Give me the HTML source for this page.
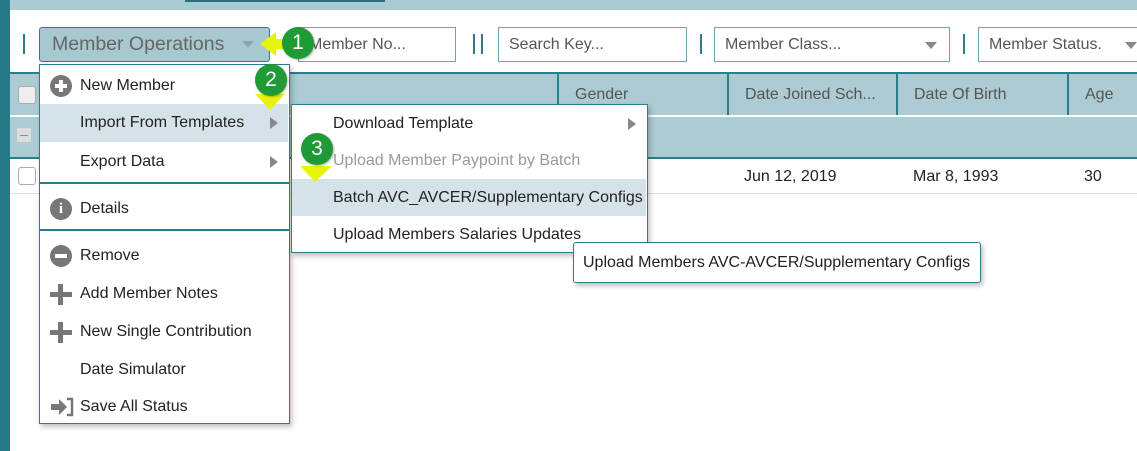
<!DOCTYPE html>
<html><head><style>
*{box-sizing:border-box;margin:0;padding:0}
body{width:1137px;height:451px;overflow:hidden;background:#fff;font-family:"Liberation Sans","DejaVu Sans",sans-serif;position:relative;font-size:16px;color:#222}
.a{position:absolute}
.inp{position:absolute;top:27px;height:35px;border:1px solid #6fa3ad;background:#fff;color:#555;font-size:16px;padding:8px 10px;white-space:nowrap;overflow:hidden}
.sep{position:absolute;top:34px;width:2px;height:20px;background:#2a7f8a}
.tri{position:absolute;width:0;height:0;border-left:6px solid transparent;border-right:6px solid transparent;border-top:7px solid #888}
.hd{position:absolute;top:74px;height:41px;color:#555;font-size:16px;padding:12px 0 0 16px;border-left:2px solid #2a7f8a;white-space:nowrap}
.mi{position:absolute;left:0;width:248px;height:38px;padding-left:40px;line-height:38px;font-size:16px;color:#222;white-space:nowrap}
.si{position:absolute;left:0;width:354px;height:37px;padding-left:41px;line-height:37px;font-size:16px;color:#222;white-space:nowrap}
.rt{position:absolute;right:10px;top:13px;width:0;height:0;border-top:6px solid transparent;border-bottom:6px solid transparent;border-left:8px solid #888}
.gc{position:absolute;width:32px;height:32px;border-radius:50%;background:#1f9a36;color:#fff;font-size:21px;text-align:center;line-height:32px;box-shadow:1px 1px 2px rgba(0,0,0,.3)}
.ic{position:absolute;left:10px;width:22px;height:22px;border-radius:50%;background:#777;top:8px}
</style></head><body>
<div class="a" style="left:0;top:0;width:1137px;height:10px;background:#a9cbd3"></div>
<div class="a" style="left:185px;top:0;width:200px;height:2px;background:#2a6f7a"></div>
<div class="a" style="left:0;top:0;width:10px;height:451px;background:#267a88"></div>
<div class="sep" style="left:23px"></div>
<div class="a" style="left:39px;top:27px;width:231px;height:35px;background:#a8c8cf;border:1px solid #2a7f8a;border-radius:3px;color:#666;font-size:19.5px;padding:5px 12px;white-space:nowrap">Member Operations</div>
<div class="tri" style="left:242px;top:41px;border-top-color:#8aa"></div>
<div class="inp" style="left:298px;width:158px">Member No...</div>
<div class="sep" style="left:473px"></div><div class="sep" style="left:481px"></div>
<div class="inp" style="left:498px;width:189px">Search Key...</div>
<div class="sep" style="left:700px"></div>
<div class="inp" style="left:714px;width:236px">Member Class...</div>
<div class="tri" style="left:925px;top:42px"></div>
<div class="sep" style="left:963px"></div>
<div class="inp" style="left:978px;width:170px">Member Status.</div>
<div class="tri" style="left:1125px;top:42px"></div>
<div class="a" style="left:10px;top:72px;width:1127px;height:2px;background:#2a7f8a"></div>
<div class="a" style="left:10px;top:74px;width:1127px;height:84px;background:#adcbd3"></div>
<div class="a" style="left:10px;top:115px;width:1127px;height:2px;background:#fff"></div>
<div class="a" style="left:10px;top:157px;width:1127px;height:2px;background:#2a7f8a"></div>
<div class="a" style="left:18px;top:86px;width:18px;height:18px;background:#eee;border:1px solid #aaa;border-radius:3px"></div>
<div class="a" style="left:17px;top:128px;width:14px;height:14px;background:#ddd;color:#888;font-size:14px;line-height:12px;text-align:center">–</div>
<div class="a" style="left:18px;top:167px;width:18px;height:18px;background:#fff;border:1px solid #aaa;border-radius:3px"></div>
<div class="hd" style="left:557px;width:170px">Gender</div>
<div class="hd" style="left:727px;width:169px">Date Joined Sch...</div>
<div class="hd" style="left:896px;width:171px">Date Of Birth</div>
<div class="hd" style="left:1067px;width:70px">Age</div>
<div class="a" style="left:744px;top:168px">Jun 12, 2019</div>
<div class="a" style="left:913px;top:168px">Mar 8, 1993</div>
<div class="a" style="left:1084px;top:168px">30</div>
<div class="a" style="left:10px;top:193px;width:1127px;height:1px;background:#ddd"></div>

<div class="a" style="left:39px;top:64px;width:251px;height:360px;background:#fff;border:1px solid #2a7f8a;box-shadow:2px 3px 5px rgba(0,0,0,.25)">
 <div class="mi" style="top:2px"><div class="ic"><div class="a" style="left:5px;top:9px;width:12px;height:4px;background:#fff"></div><div class="a" style="left:9px;top:5px;width:4px;height:12px;background:#fff"></div></div>New Member</div>
 <div class="mi" style="top:39px;background:#d5e3e8">Import From Templates<div class="rt"></div></div>
 <div class="mi" style="top:78px">Export Data<div class="rt"></div></div>
 <div class="a" style="left:0;top:117px;width:249px;height:2px;background:#2a7f8a"></div>
 <div class="mi" style="top:125px"><div class="ic" style="color:#fff;font-weight:bold;font-size:15px;text-align:center;line-height:22px;font-family:'Liberation Serif',serif">i</div>Details</div>
 <div class="a" style="left:0;top:164px;width:249px;height:2px;background:#2a7f8a"></div>
 <div class="mi" style="top:172px"><div class="ic"><div class="a" style="left:5px;top:9px;width:12px;height:4px;background:#fff"></div></div>Remove</div>
 <div class="mi" style="top:210px"><div class="a" style="left:10px;top:17px;width:22px;height:5px;background:#777"></div><div class="a" style="left:18px;top:9px;width:5px;height:21px;background:#777"></div>Add Member Notes</div>
 <div class="mi" style="top:248px"><div class="a" style="left:10px;top:17px;width:22px;height:5px;background:#777"></div><div class="a" style="left:18px;top:9px;width:5px;height:21px;background:#777"></div>New Single Contribution</div>
 <div class="mi" style="top:286px">Date Simulator</div>
 <div class="mi" style="top:323px"><svg class="a" style="left:10px;top:9px" width="24" height="20" viewBox="0 0 24 20"><path d="M1 7h8V2l8 8-8 8v-5H1z" fill="#777"/><path d="M17 2h5v16h-5" fill="none" stroke="#777" stroke-width="2.5"/></svg>Save All Status</div>
</div>

<div class="a" style="left:291px;top:104px;width:357px;height:149px;background:#fff;border:1px solid #2a7f8a;box-shadow:2px 3px 5px rgba(0,0,0,.25)">
 <div class="si" style="top:0">Download Template<div class="rt"></div></div>
 <div class="si" style="top:37px;color:#999">Upload Member Paypoint by Batch</div>
 <div class="si" style="top:74px;background:#d5e3e8">Batch AVC_AVCER/Supplementary Configs</div>
 <div class="si" style="top:111px">Upload Members Salaries Updates</div>
</div>
<div class="a" style="left:573px;top:242px;width:408px;height:41px;background:#fff;border:1px solid #2a7f8a;border-radius:3px;box-shadow:2px 3px 5px rgba(0,0,0,.25);padding:11px 9px;white-space:nowrap">Upload Members AVC-AVCER/Supplementary Configs</div>

<svg class="a" style="left:258px;top:30px" width="30" height="30"><path d="M2 14L18 2v7h10v10H18v7z" fill="#e8f50a"/></svg>
<div class="gc" style="left:282px;top:27px">1</div>
<svg class="a" style="left:253px;top:92px" width="34" height="20"><path d="M2 2h30L17 18z" fill="#e8f50a"/></svg>
<div class="gc" style="left:255px;top:64px">2</div>
<svg class="a" style="left:298px;top:164px" width="36" height="20"><path d="M2 2h32L17 18z" fill="#e8f50a"/></svg>
<div class="gc" style="left:301px;top:133px">3</div>
</body></html>
